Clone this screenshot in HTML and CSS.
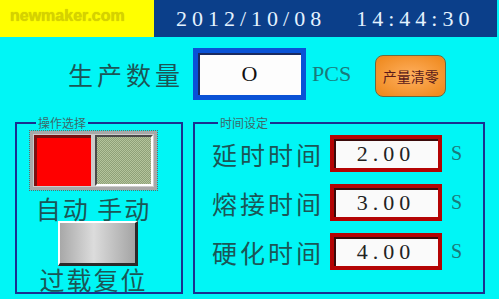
FILE: index.html
```html
<!DOCTYPE html>
<html lang="zh-CN">
<head>
  <meta charset="UTF-8">
  <title>生产监控</title>
  <link rel="stylesheet" href="styles.css">
</head>
<body>
  <div class="topbar">
    <div class="brand">newmaker.com</div>
    <div class="clock">
      <span class="date">2012/10/08</span>
      <span class="time">14:44:30</span>
    </div>
  </div>

  <div class="count-row">
    <span class="big-label">生产数量</span>
    <div class="count-box">O</div>
    <span class="unit">PCS</span>
    <button class="clear-btn">产量清零</button>
  </div>

  <div class="panels">
    <fieldset class="group mode-group">
      <legend>操作选择</legend>
      <div class="switch">
        <div class="lamp lamp-auto"></div>
        <div class="lamp lamp-manual"></div>
      </div>
      <div class="big-label center">自动 手动</div>
      <button class="reset-btn"></button>
      <div class="big-label center">过载复位</div>
    </fieldset>

    <fieldset class="group time-group">
      <legend>时间设定</legend>
      <div class="time-row">
        <span class="big-label">延时时间</span>
        <div class="value-box">2.00</div>
        <span class="unit-s">S</span>
      </div>
      <div class="time-row">
        <span class="big-label">熔接时间</span>
        <div class="value-box">3.00</div>
        <span class="unit-s">S</span>
      </div>
      <div class="time-row">
        <span class="big-label">硬化时间</span>
        <div class="value-box">4.00</div>
        <span class="unit-s">S</span>
      </div>
    </fieldset>
  </div>
</body>
</html>
```

FILE: styles.css
```css
body {
  margin: 0;
  width: 499px;
  height: 299px;
  overflow: hidden;
  background: #00f6f6;
  font-family: "Noto Sans CJK SC", "Liberation Serif", serif;
  color: #1b5656;
}
.topbar {
  display: flex;
  height: 37px;
  padding-right: 2px;
}
.brand {
  width: 144px;
  padding-left: 10px;
  background: #ffff00;
  color: #d6d200;
  font-family: "Liberation Sans", sans-serif;
  font-weight: bold;
  font-size: 16px;
  line-height: 31px;
  text-shadow: 0 0 1px #c8c400;
}
.clock {
  flex: 1;
  display: flex;
  align-items: center;
  gap: 30px;
  padding-left: 22px;
  background: #0b3f8a;
  color: #e4f2ff;
  font-family: "Liberation Serif", serif;
  font-size: 22px;
  letter-spacing: 5px;
}
.count-row {
  display: flex;
  align-items: center;
  height: 52px;
  margin-top: 11px;
  padding-left: 68px;
}
.big-label {
  font-size: 25px;
  letter-spacing: 3px;
  line-height: 30px;
  color: #1b5656;
}
.count-row .big-label {
  letter-spacing: 4px;
}
.center {
  text-align: center;
  letter-spacing: 2px;
}
.count-box {
  width: 103px;
  height: 42px;
  margin-left: 9px;
  border: 5px solid #0a52d6;
  background: #fdfdfd;
  box-shadow: inset 2px 2px 0 #1a2a60;
  font-family: "Liberation Serif", serif;
  font-size: 22px;
  line-height: 42px;
  text-align: center;
  color: #111;
}
.unit {
  margin-left: 6px;
  font-family: "Liberation Serif", serif;
  font-size: 22px;
  color: #1a7a7a;
}
.clear-btn {
  width: 71px;
  height: 42px;
  margin: 3px 0 0 24px;
  padding: 0;
  border: 1px solid #6a6a40;
  border-radius: 8px;
  background: radial-gradient(ellipse at center, #ffb060 0%, #f08c22 85%);
  font-family: "Noto Sans CJK SC", sans-serif;
  font-size: 14px;
  color: #5a1a1a;
}
.panels {
  display: flex;
  gap: 10px;
  margin-top: 17px;
  padding-left: 15px;
}
.group {
  margin: 0;
  min-width: 0;
  border: 2px solid #1a3090;
  height: 177px;
  box-sizing: border-box;
}
.group legend {
  margin-left: 6px;
  padding: 0 2px;
  font-size: 12px;
  line-height: 12px;
  color: #3c6a6a;
}
.mode-group {
  width: 168px;
  padding: 2px 0 0 13px;
}
.time-group {
  width: 292px;
  padding: 6px 0 0 17px;
}
.switch {
  display: flex;
  gap: 4px;
  width: 119px;
  height: 51px;
  padding: 1px;
  border: 3px solid #a8a8a8;
  background: #ccc;
  outline: 1px dotted #666;
}
.lamp {
  flex: 1;
  box-sizing: border-box;
}
.lamp-auto {
  background: #ff0000;
  border-top: 3px solid #7a1010;
  border-left: 3px solid #7a1010;
}
.lamp-manual {
  background-color: #a2b48a;
  background-image: repeating-conic-gradient(#8ea078 0 25%, #b4c49c 0 50%);
  background-size: 2px 2px;
  border-top: 2px solid #4a4a4a;
  border-left: 2px solid #4a4a4a;
  border-bottom: 2px solid #fff;
  border-right: 2px solid #fff;
}
.mode-group .big-label {
  width: 127px;
  line-height: 26px;
}
.mode-group .switch + .big-label {
  margin-top: 5px;
}
.reset-btn {
  display: block;
  width: 80px;
  height: 45px;
  margin: 0 0 0 28px;
  padding: 0;
  border-top: 2px solid #fff;
  border-left: 2px solid #fff;
  border-bottom: 3px solid #2a2a2a;
  border-right: 3px solid #2a2a2a;
  background: linear-gradient(to right, #a8a8a8, #dcdcdc 45%, #a4a4a4);
}
.time-row {
  display: flex;
  align-items: center;
  height: 37px;
  margin-bottom: 12px;
}
.value-box {
  width: 104px;
  height: 29px;
  margin-left: 6px;
  border: 4px solid #b40404;
  background: #fafafa;
  box-shadow: inset 2px 2px 0 #3a0a0a;
  font-family: "Liberation Serif", serif;
  font-size: 22px;
  line-height: 29px;
  letter-spacing: 5px;
  text-align: center;
  color: #222;
}
.unit-s {
  margin-left: 9px;
  font-family: "Liberation Serif", serif;
  font-size: 20px;
  color: #1a7a7a;
}
```
